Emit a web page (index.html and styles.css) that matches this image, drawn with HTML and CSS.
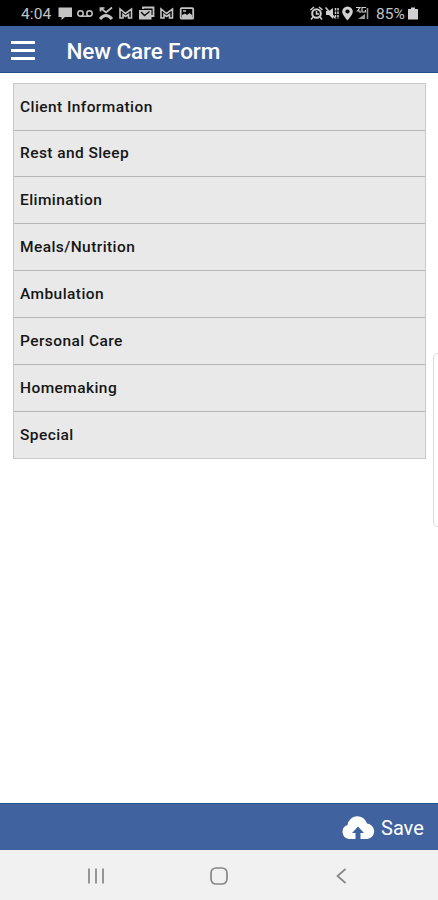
FILE: index.html
```html
<!DOCTYPE html>
<html lang="en">
<head>
<meta charset="utf-8">
<title>New Care Form</title>
<link rel="stylesheet" href="styles.css">
</head>
<body>
<div class="screen">
  <div class="status">
    <span class="clock">4:04</span>
    <svg class="notices" width="140" height="26" viewBox="0 0 140 26" fill="none" stroke="#c4c4c4" stroke-width="1.500">
      <path d="M1.500 7.500H15V17H8L4.500 20V17H1.500Z" fill="#c4c4c4" stroke="none"/>
      <circle cx="23.500" cy="13.500" r="2.700"/><circle cx="32.500" cy="13.500" r="2.700"/><path d="M23.500 16.200H32.500"/>
      <path d="M43.500 8L49 12.500L55 7.500M43.500 11.500V8H47.500" stroke-width="1.700"/><path d="M43 19Q49 12 55 19" stroke-width="3"/>
      <path d="M63 9V18H66V14.500L68.500 16.500L71.500 14.500V18H74.500V9L68.500 13.500Z" stroke-width="1.600"/>
      <path d="M86 9V7.500H96.500V16H94" stroke-width="1.800"/><rect x="82" y="10" width="12.500" height="9.500" fill="#c4c4c4" stroke="none"/><path d="M84 12L87.500 15.500L92.500 11.500" stroke="#111"/>
      <path d="M104 9V18H107V14.500L109.500 16.500L112.500 14.500V18H115.500V9L109.500 13.500Z" stroke-width="1.600"/>
      <rect x="123.700" y="8.200" width="12.500" height="10.500" rx="1" stroke-width="1.800"/><path d="M125 18V15L128 13.500L130 15L132.500 13L135 15V18Z" fill="#c4c4c4" stroke="none"/><path d="M126 11H129"/>
    </svg>
    <svg class="signals" width="62" height="26" viewBox="0 0 62 26" fill="none" stroke="#d0d0d0" stroke-width="1.500">
      <circle cx="7.500" cy="13.500" r="4.300" stroke-width="2"/><path d="M1.500 10L5 7M13.500 10L10 7M4 17L2 19.500M11 17L13 19.500M7.500 11V14H10"/>
      <path d="M17 11H20L24 8V19L20 15H17Z" fill="#d0d0d0" stroke="none"/><path d="M16.500 7.500L26 18"/><path d="M26.500 8V19M29 8V19" stroke-dasharray="2.500 1"/>
      <path d="M38.500 6.500A5.300 5.300 0 0 0 33.200 11.800C33.200 14.800 38.500 20.500 38.500 20.500S43.800 14.800 43.800 11.800A5.300 5.300 0 0 0 38.500 6.500Z" fill="#d0d0d0" stroke="none"/><circle cx="38.500" cy="11.500" r="2.100" fill="#000" stroke="none"/>
      <path d="M47 7.500H51L48.500 11H51V13M57 7.500H53V12H56.500V10" stroke-width="1.200"/><path d="M49 19L56 14V19Z" fill="#999" stroke="none"/><path d="M58.500 8V19" stroke="#999"/>
    </svg>
    <span class="charge">85%</span>
    <svg class="battery" width="10" height="26" viewBox="0 0 10 26"><path d="M3 7.500H7V9H10V19.500H0V9H3Z" fill="#d0d0d0"/></svg>
  </div>
  <header class="header">
    <div class="menu"><i></i><i></i><i></i></div>
    <h1 class="title">New Care Form</h1>
  </header>
  <main class="content">
    <ul class="sections">
      <li>Client Information</li>
      <li>Rest and Sleep</li>
      <li>Elimination</li>
      <li>Meals/Nutrition</li>
      <li>Ambulation</li>
      <li>Personal Care</li>
      <li>Homemaking</li>
      <li>Special</li>
    </ul>
    <div class="edge-handle"></div>
  </main>
  <footer class="footer">
    <svg width="34" height="24" viewBox="0 0 34 24"><path d="M8 23A7.200 7.200 0 0 1 6.500 9A10 10 0 0 1 26 7.500A7.800 7.800 0 0 1 26.500 23H19.500V17H23L17 10.500L11 17H14.500V23Z" fill="#fff"/></svg>
    <span class="save">Save</span>
  </footer>
  <nav class="nav">
    <svg width="18" height="18" viewBox="0 0 18 18" fill="none" stroke="#878787" stroke-width="1.700"><path d="M2 1.500V16.500M9 1.500V16.500M16 1.500V16.500"/></svg>
    <svg width="18" height="18" viewBox="0 0 18 18" fill="none" stroke="#878787" stroke-width="1.700"><rect x="1" y="1" width="16" height="16" rx="5"/></svg>
    <svg width="18" height="18" viewBox="0 0 18 18" fill="none" stroke="#878787" stroke-width="1.700"><path d="M13.500 2L5.500 9L13.500 16"/></svg>
  </nav>
</div>
</body>
</html>
```
FILE: styles.css
```css
* { box-sizing: border-box; }
body { margin: 0; font-family: Roboto, "Liberation Sans", sans-serif; background: #fff; }
.screen { height: 900px; display: flex; flex-direction: column; overflow: hidden; }
.screen svg { display: block; flex: none; }
.status { height: 26px; background: #000; display: flex; align-items: center; padding-left: 21px; color: #c4c4c4; font-size: 15.5px; line-height: 26px; flex: none; }
.clock { width: 36px; padding-top: 2px; letter-spacing: 0.1px; }
.signals { margin-left: 112px; }
.charge { width: 32px; margin-left: 5px; padding-top: 2px; white-space: nowrap; }
.header { height: 47px; flex: none; background: #40629f; border-bottom: 1px solid #1f508c; display: flex; align-items: center; padding: 3px 0 0 11px; }
.menu { width: 24px; display: flex; flex-direction: column; gap: 5.5px; margin-right: 31.5px; }
.menu i { height: 2.5px; background: #fff; }
.title { margin: 0; font-size: 22.5px; font-weight: 500; line-height: 26px; color: #fff; letter-spacing: -0.1px; padding-top: 1px; }
.content { flex: 1; position: relative; padding: 10px 12px 0 13px; }
.sections { list-style: none; margin: 0; padding: 0; height: 376px; display: grid; grid-template-rows: 45.5px repeat(7, 1fr); background: #e9e9e9; border: 1px solid #c9c9c9; }
.sections li { display: flex; align-items: center; padding-left: 6px; font-size: 15.5px; font-weight: 500; color: #161616; letter-spacing: 0.42px; }
.sections li + li { border-top: 1px solid #b6b6b6; }
.edge-handle { position: absolute; top: 280px; right: -7px; width: 12px; height: 174px; border: 1px solid #d9d9d9; border-radius: 5px; background: #fff; }
.footer { height: 47px; flex: none; background: #40629f; border-top: 1px solid #1f5795; display: flex; align-items: center; padding: 2px 0 0 341px; color: #fff; }
.save { margin-left: 6px; font-size: 20px; line-height: 24px; }
.nav { height: 50px; flex: none; background: #f1f1f1; display: flex; justify-content: space-between; padding: 17px 88px 0 87px; }
```
